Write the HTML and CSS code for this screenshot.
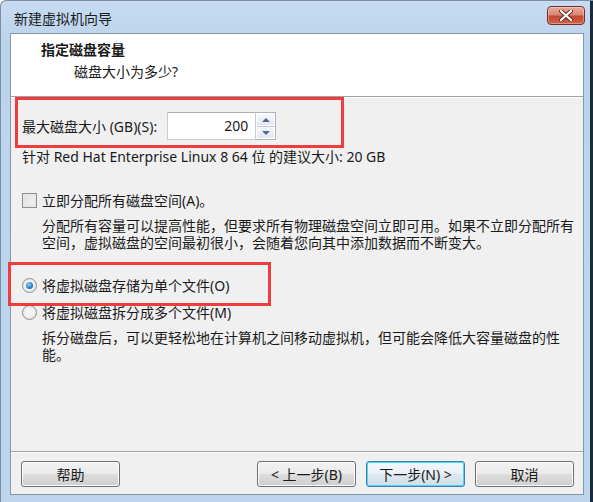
FILE: index.html
```html
<!DOCTYPE html>
<html>
<head>
  <meta charset="UTF-8">
  <title>新建虚拟机向导</title>
  <link rel="stylesheet" href="styles.css">
</head>
<body>
  <div class="window">
    <div class="title-bar">
      <span class="title">新建虚拟机向导</span>
      <button class="x-icon">
        <svg width="14" height="11" viewBox="0 0 14 11">
          <path d="M2 1 L12 10 M12 1 L2 10" stroke="#5a2a22" stroke-width="4" stroke-linecap="round"/>
          <path d="M2 1 L12 10 M12 1 L2 10" stroke="#fff" stroke-width="2.2" stroke-linecap="round"/>
        </svg>
      </button>
    </div>

    <div class="client">
      <div class="header">
        <div class="headTitle">指定磁盘容量</div>
        <div class="headSub">磁盘大小为多少?</div>
      </div>
      <div class="etched"></div>

      <div class="body">
        <div class="sizeRow">
          <span>最大磁盘大小 (GB)(S):</span>
          <div class="spinBox">
            <div class="spinInput">200</div>
            <div class="spinButtons">
              <div class="spinBtn"><span class="triUp"></span></div>
              <div class="spinBtn"><span class="triDown"></span></div>
            </div>
          </div>
        </div>
        <div class="hint">针对 Red Hat Enterprise Linux 8 64 位 的建议大小: 20 GB</div>

        <div class="optRow checkRow">
          <span class="checkBox"></span>
          <span>立即分配所有磁盘空间(A)。</span>
        </div>
        <div class="desc">
          <div class="descLine">分配所有容量可以提高性能，但要求所有物理磁盘空间立即可用。如果不立即分配所有</div>
          <div class="descLine">空间，虚拟磁盘的空间最初很小，会随着您向其中添加数据而不断变大。</div>
        </div>

        <div class="optRow radioFirst">
          <span class="radio checked"></span>
          <span>将虚拟磁盘存储为单个文件(O)</span>
        </div>
        <div class="optRow radioSecond">
          <span class="radio"></span>
          <span>将虚拟磁盘拆分成多个文件(M)</span>
        </div>
        <div class="desc">
          <div class="descLine">拆分磁盘后，可以更轻松地在计算机之间移动虚拟机，但可能会降低大容量磁盘的性</div>
          <div class="descLine">能。</div>
        </div>
      </div>

      <div class="footer">
        <button class="winButton">帮助</button>
        <div class="navButtons">
          <button class="winButton">&lt; 上一步(B)</button>
          <button class="winButton defaultButton">下一步(N) &gt;</button>
          <button class="winButton">取消</button>
        </div>
      </div>

      <!-- red annotation boxes drawn over the dialog -->
      <div class="markBox markOne"></div>
      <div class="markBox markTwo"></div>
    </div>
  </div>
</body>
</html>
```

FILE: styles.css
```css
body {
  margin: 0;
  padding: 0;
  overflow: hidden;
  font-family: "Noto Sans", "Noto Sans CJK SC", sans-serif;
  font-size: 14px;
  color: #1a1a1a;
  background: #fff;
}

.window {
  width: 593px;
  height: 502px;
  box-sizing: border-box;
  display: flex;
  flex-direction: column;
  padding: 0 9px 7px 9px;
  background: linear-gradient(to bottom, #c7dcf1, #bcd3ec 40px, #bed5ee);
  border-top-left-radius: 6px;
  border-left: 1px solid #7b8ea6;
  border-top: 1px solid #7b8ea6;
  box-shadow: inset -3px 0 0 #1b2b3c;
}

.title-bar {
  height: 32px;
  display: flex;
  align-items: center;
  padding-left: 4px;
  flex-shrink: 0;
}

.title {
  margin-top: 2px;
}

.x-icon {
  margin-left: auto;
  margin-right: -1px;
  margin-top: -4px;
  width: 38px;
  height: 19px;
  padding: 0;
  border: 1px solid #6f3127;
  border-radius: 4px;
  background: linear-gradient(to bottom, #e9a99b, #d98776 45%, #c6472f 55%, #d0624b);
  display: flex;
  align-items: center;
  justify-content: center;
  box-shadow: inset 0 0 0 1px rgba(255, 255, 255, 0.35);
}

.client {
  position: relative;
  flex: 1;
  display: flex;
  flex-direction: column;
  background: #f0f0f0;
  border: 1px solid #8797ab;
}

.header {
  height: 62px;
  background: #fff;
  padding: 7px 0 0 30px;
  box-sizing: border-box;
  line-height: 17px;
}

.headTitle {
  font-weight: bold;
}

.headSub {
  margin-top: 5px;
  padding-left: 33px;
}

.etched {
  border-top: 1px solid #a0a0a0;
  border-bottom: 1px solid #fff;
}

.body {
  padding-left: 11px;
  line-height: 17px;
}

.sizeRow {
  display: flex;
  align-items: center;
  margin-top: 14px;
  gap: 10px;
}

.spinBox {
  display: flex;
  height: 28px;
}

.spinInput {
  width: 80px;
  border: 1px solid #c5cdd6;
  border-top-color: #abadb3;
  background: #fff;
  text-align: right;
  padding-right: 7px;
  line-height: 26px;
}

.spinButtons {
  width: 19px;
  display: flex;
  flex-direction: column;
  border: 1px solid #a9b2bd;
  border-left: none;
}

.spinBtn {
  flex: 1;
  display: flex;
  align-items: center;
  justify-content: center;
  background: linear-gradient(to bottom, #f6f7f9, #e4e8ee);
  border: 1px solid #fff;
}

.spinBtn + .spinBtn {
  border-top: 1px solid #c3cad3;
}

.triUp {
  border-left: 4px solid transparent;
  border-right: 4px solid transparent;
  border-bottom: 4px solid #4e6a94;
}

.triDown {
  border-left: 4px solid transparent;
  border-right: 4px solid transparent;
  border-top: 4px solid #4e6a94;
}

.hint {
  margin-top: 8px;
}

.optRow {
  display: flex;
  align-items: center;
  gap: 5px;
}

.checkRow {
  margin-top: 27px;
}

.checkBox {
  width: 13px;
  height: 13px;
  border: 1px solid #8e8f8f;
  background: linear-gradient(135deg, #dcdcdc, #f7f7f7);
  box-shadow: inset 0 0 0 2px #e6e6e6;
}

.desc {
  margin-top: 8px;
  padding-left: 20px;
}

.descLine {
  height: 17px;
  white-space: nowrap;
}

.radioFirst {
  margin-top: 26px;
}

.radioSecond {
  margin-top: 10px;
}

.radio {
  width: 13px;
  height: 13px;
  border-radius: 50%;
  border: 1px solid #8e8f8f;
  background: radial-gradient(circle, #f4f4f4 40%, #d8d8d8);
  display: flex;
  align-items: center;
  justify-content: center;
}

.radio.checked::after {
  content: "";
  width: 7px;
  height: 7px;
  border-radius: 50%;
  background: radial-gradient(circle at 40% 35%, #8fd0f7, #1a6fb5 70%, #0d4f8a);
}

.footer {
  margin-top: auto;
  border-top: 1px solid #a0a0a0;
  box-shadow: inset 0 1px 0 #fff;
  display: flex;
  align-items: center;
  padding: 9px 9px 7px 10px;
}

.navButtons {
  margin-left: auto;
  display: flex;
  gap: 10px;
}

.winButton {
  width: 99px;
  height: 26px;
  font-family: "Noto Sans", "Noto Sans CJK SC", sans-serif;
  font-size: 14px;
  color: #1a1a1a;
  border: 1px solid #707070;
  border-radius: 3px;
  background: linear-gradient(to bottom, #f2f2f2, #ebebeb 48%, #dddddd 52%, #cfcfcf);
  box-shadow: inset 0 0 0 1px #fcfcfc;
  padding: 0;
}

.defaultButton {
  border-color: #3c7fb1;
  box-shadow: inset 0 0 0 1px #48d8fb;
  background: linear-gradient(to bottom, #f4f8fb, #e9f0f6 48%, #dfe8f0 52%, #d3dde8);
}

.markBox {
  position: absolute;
  border: 3px solid #ee3d3f;
  box-sizing: border-box;
  pointer-events: none;
}

.markOne {
  left: 4px;
  top: 63px;
  width: 329px;
  height: 51px;
}

.markTwo {
  left: -3px;
  top: 228px;
  width: 263px;
  height: 44px;
}
```
